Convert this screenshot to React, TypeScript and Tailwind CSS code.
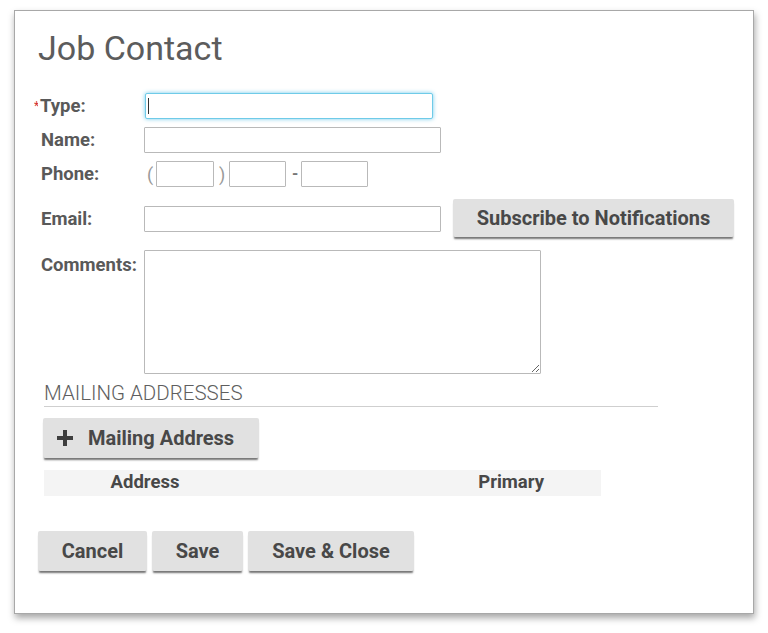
const btn =
  "bg-[#e1e1e1] rounded-[2px] text-[#484848] font-bold shadow-[0_3px_2px_-1px_rgba(0,0,0,0.55)] flex items-center justify-center";
const input = "h-[26px] border border-[#b9b9b9] bg-white rounded-[1px]";

const Label = ({ children }: { children: React.ReactNode }) => (
  <div className="text-[18.5px] font-bold text-[#595959] leading-[20px]">{children}</div>
);

export default function App() {
  return (
    <div className="w-[768px] h-[633px] bg-white pt-[10px] pl-[14px] font-['Roboto',sans-serif]">
      <div className="w-[740px] h-[604px] bg-white border border-[#a8a8a8] shadow-[1px_4px_7px_rgba(0,0,0,0.35)] pt-[17px] pl-[22px]">
        <h1 className="text-[34px] leading-[40px] text-[#5c5c5c] font-normal ml-[1px]">Job Contact</h1>

        <div className="mt-[25px] flex flex-col">
          {/* Type */}
          <div className="flex items-center h-[26px]">
            <div className="w-[108px] flex items-center">
              <span className="text-[#d32f2f] text-[12px] w-[4px] overflow-hidden -ml-[3px] mr-[2px] leading-none">*</span>
              <Label>Type:</Label>
            </div>
            <div className="w-[288px] h-[26px] border border-[#6fcbe8] rounded-[2px] shadow-[0_0_4px_rgba(80,190,230,0.8)] bg-white flex items-center pl-[2px]">
              <div className="w-[1px] h-[16px] bg-[#333]" />
            </div>
          </div>

          {/* Name */}
          <div className="flex items-center h-[26px] mt-[8px] ml-[4px]">
            <div className="w-[103px]">
              <Label>Name:</Label>
            </div>
            <div className={`${input} w-[297px]`} />
          </div>

          {/* Phone */}
          <div className="flex items-center h-[26px] mt-[8px] ml-[4px]">
            <div className="w-[103px]">
              <Label>Phone:</Label>
            </div>
            <span className="text-[18px] text-[#9a9a9a] ml-[3px] w-[9px]">(</span>
            <div className={`${input} w-[58px]`} />
            <span className="text-[18px] text-[#9a9a9a] ml-[5px] w-[10px]">)</span>
            <div className={`${input} w-[57px]`} />
            <span className="text-[16px] text-[#777] font-bold ml-[6px] w-[9px]">-</span>
            <div className={`${input} w-[67px]`} />
          </div>

          {/* Email */}
          <div className="flex items-start h-[41px] mt-[12px] ml-[4px]">
            <div className="w-[103px] mt-[10px]">
              <Label>Email:</Label>
            </div>
            <div className={`${input} w-[297px] mt-[7px]`} />
            <button className={`${btn} ml-[12px] w-[281px] h-[38px] text-[20px]`}>
              Subscribe to Notifications
            </button>
          </div>

          {/* Comments */}
          <div className="flex items-start mt-[10px] ml-[4px]">
            <div className="w-[103px] mt-[5px]">
              <Label>Comments:</Label>
            </div>
            <textarea className="w-[397px] h-[124px] border border-[#b9b9b9] rounded-[1px] bg-white outline-none" />
          </div>
        </div>

        {/* Mailing addresses */}
        <div className="mt-[6px] ml-[7px] w-[614px] h-[27px] border-b border-[#cfcfcf] text-[20.5px] leading-[26px] text-[#5e5e5e] font-light">
          MAILING ADDRESSES
        </div>

        <button className={`${btn} mt-[11px] ml-[6px] w-[216px] h-[40px] text-[20px] justify-start pl-[13px] gap-[14px]`}>
          <svg width="18" height="18" viewBox="0 0 18 18">
            <path d="M7 1h4v6h6v4h-6v6H7v-6H1V7h6z" fill="#3e3e3e" />
          </svg>
          Mailing Address
        </button>

        <div className="mt-[12px] ml-[7px] w-[557px] h-[26px] bg-[#f4f4f4] flex items-center text-[18.5px] font-bold text-[#484848]">
          <div className="w-[202px] text-center">Address</div>
          <div className="w-[298px] text-right">Primary</div>
        </div>

        <div className="mt-[35px] ml-[1px] flex gap-[5px]">
          <button className={`${btn} w-[109px] h-[40px] text-[20px]`}>Cancel</button>
          <button className={`${btn} w-[91px] h-[40px] text-[20px]`}>Save</button>
          <button className={`${btn} w-[166px] h-[40px] text-[20px]`}>Save &amp; Close</button>
        </div>
      </div>
    </div>
  );
}
